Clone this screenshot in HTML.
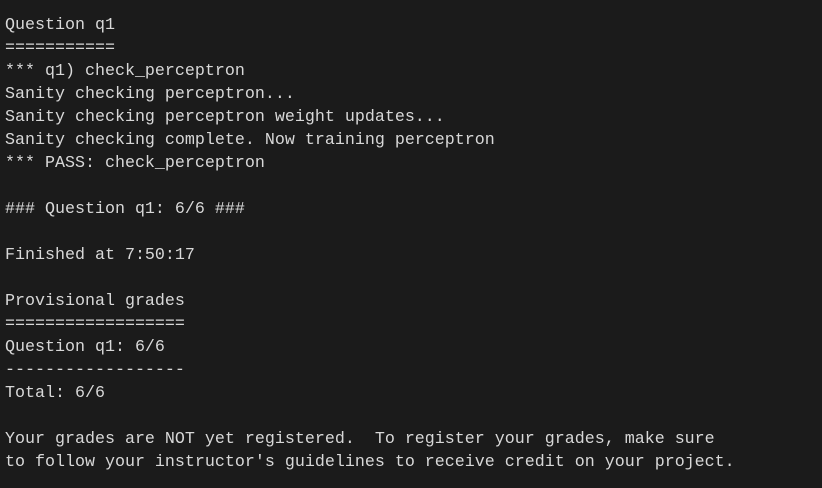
<!DOCTYPE html>
<html><head><meta charset="utf-8"><style>
html,body{margin:0;padding:0;background:#1b1b1b;width:822px;height:488px;overflow:hidden}
pre{margin:0;padding:14px 0 0 5px;font-family:"Liberation Mono",monospace;font-size:16.67px;line-height:23px;color:#d8d8d8}
</style></head><body><pre>Question q1
===========
*** q1) check_perceptron
Sanity checking perceptron...
Sanity checking perceptron weight updates...
Sanity checking complete. Now training perceptron
*** PASS: check_perceptron

### Question q1: 6/6 ###

Finished at 7:50:17

Provisional grades
==================
Question q1: 6/6
------------------
Total: 6/6

Your grades are NOT yet registered.  To register your grades, make sure
to follow your instructor's guidelines to receive credit on your project.</pre></body></html>
